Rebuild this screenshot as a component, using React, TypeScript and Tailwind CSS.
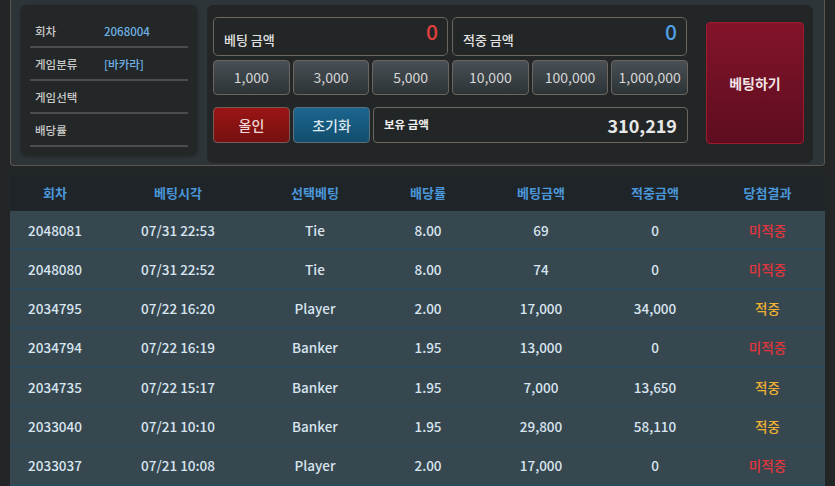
import React from 'react';

const font = { fontFamily: '"Noto Sans CJK KR", "Noto Sans", sans-serif' };

const infoRows = [
  { label: '회차', value: '2068004' },
  { label: '게임분류', value: '[바카라]' },
  { label: '게임선택', value: '' },
  { label: '배당률', value: '' },
];

const chips = ['1,000', '3,000', '5,000', '10,000', '100,000', '1,000,000'];

type Row = {
  round: string;
  time: string;
  pick: string;
  odds: string;
  bet: string;
  win: string;
  hit: boolean;
};

const rows: Row[] = [
  { round: '2048081', time: '07/31 22:53', pick: 'Tie', odds: '8.00', bet: '69', win: '0', hit: false },
  { round: '2048080', time: '07/31 22:52', pick: 'Tie', odds: '8.00', bet: '74', win: '0', hit: false },
  { round: '2034795', time: '07/22 16:20', pick: 'Player', odds: '2.00', bet: '17,000', win: '34,000', hit: true },
  { round: '2034794', time: '07/22 16:19', pick: 'Banker', odds: '1.95', bet: '13,000', win: '0', hit: false },
  { round: '2034735', time: '07/22 15:17', pick: 'Banker', odds: '1.95', bet: '7,000', win: '13,650', hit: true },
  { round: '2033040', time: '07/21 10:10', pick: 'Banker', odds: '1.95', bet: '29,800', win: '58,110', hit: true },
  { round: '2033037', time: '07/21 10:08', pick: 'Player', odds: '2.00', bet: '17,000', win: '0', hit: false },
];

const headers = ['회차', '베팅시각', '선택베팅', '배당률', '베팅금액', '적중금액', '당첨결과'];

const grid = 'grid grid-cols-[90px_156px_118px_108px_118px_110px_115px]';

export default function App() {
  return (
    <div className="w-[835px] h-[486px] bg-[#222626] overflow-hidden" style={font}>
      <div className="px-[10px]">
        {/* top betting panel */}
        <div className="h-[166px] bg-[#2e3538] border-x border-b border-[#5c5851] rounded-b-[4px] flex gap-[10px] pl-[10px] pt-[5px]">
          <div className="w-[176px] h-[150px] rounded-[6px] bg-[#232728] shadow-[0_1px_4px_rgba(0,0,0,0.4)] px-[9px] pt-[10px]">
            {infoRows.map(r => (
              <div key={r.label} className="h-[33px] border-b-2 border-[#4a4c4d] flex items-center pl-[5px] pt-[2px] text-[11.5px] font-medium">
                <span className="w-[69px] text-[#c9c9c9]">{r.label}</span>
                <span className="text-[#6fb2e4]">{r.value}</span>
              </div>
            ))}
          </div>

          <div className="w-[606px] h-[158px] rounded-[6px] bg-[#222627] pl-[6px] pt-[12px] flex gap-[18px]">
            <div className="w-[475px] flex flex-col">
              <div className="flex gap-[4px]">
                <div className="w-[235px] h-[39px] border border-[#6b665f] rounded-[5px] relative">
                  <span className="absolute left-[10px] top-[12px] text-[13px] font-medium text-[#e2e2e2]">베팅 금액</span>
                  <span className="absolute right-[9px] top-[-2px] text-[21px] font-medium text-[#e2403f]">0</span>
                </div>
                <div className="w-[235px] h-[39px] border border-[#6b665f] rounded-[5px] relative">
                  <span className="absolute left-[10px] top-[12px] text-[13px] font-medium text-[#e2e2e2]">적중 금액</span>
                  <span className="absolute right-[9px] top-[-2px] text-[21px] font-medium text-[#4f9fe2]">0</span>
                </div>
              </div>

              <div className="grid grid-cols-6 gap-[3px] mt-[4px]">
                {chips.map(c => (
                  <button
                    key={c}
                    className="h-[35px] rounded-[4px] border border-[#6b665f] bg-gradient-to-b from-[#485055] to-[#2d3437] text-[14px] text-[#d6d6d6]"
                  >
                    {c}
                  </button>
                ))}
              </div>

              <div className="flex gap-[3px] mt-[12px] h-[36px]">
                <button className="w-[77px] rounded-[4px] border border-[#7a5a55] bg-gradient-to-b from-[#9b1515] to-[#761010] text-[14px] font-medium text-[#f0d8d8]">
                  올인
                </button>
                <button className="w-[77px] rounded-[4px] border border-[#5e6f78] bg-gradient-to-b from-[#1b6690] to-[#134d6c] text-[14px] font-medium text-[#dde8ee]">
                  초기화
                </button>
                <div className="w-[315px] rounded-[4px] border border-[#6b665f] flex items-center justify-between pl-[10px] pr-[10px]">
                  <span className="text-[11.5px] font-bold text-[#f0f0f0]">보유 금액</span>
                  <span className="text-[18px] font-bold text-[#e8e8e8]">310,219</span>
                </div>
              </div>
            </div>

            <button className="w-[98px] h-[122px] mt-[5px] rounded-[4px] border border-[#9e1c2e] bg-gradient-to-b from-[#83142a] to-[#5e0d1f] text-[14px] font-bold text-[#f2e4e4]">
              베팅하기
            </button>
          </div>
        </div>

        {/* history table */}
        <div className="mt-[9px]">
          <div className={`${grid} h-[36px] bg-[#1f2428] items-center text-center text-[13px] font-bold text-[#4a97d9]`}>
            {headers.map(h => (
              <div key={h}>{h}</div>
            ))}
          </div>
          {rows.map(r => (
            <div
              key={r.round}
              className={`${grid} h-[39.3px] bg-[#37474f] border-b-2 border-[#2e4b5e] items-center text-center text-[13.5px] font-medium text-[#d7e5ef]`}
            >
              <div>{r.round}</div>
              <div>{r.time}</div>
              <div>{r.pick}</div>
              <div>{r.odds}</div>
              <div>{r.bet}</div>
              <div>{r.win}</div>
              <div className={r.hit ? 'text-[#f0b232]' : 'text-[#e2353d]'}>{r.hit ? '적중' : '미적중'}</div>
            </div>
          ))}
        </div>
      </div>
    </div>
  );
}
